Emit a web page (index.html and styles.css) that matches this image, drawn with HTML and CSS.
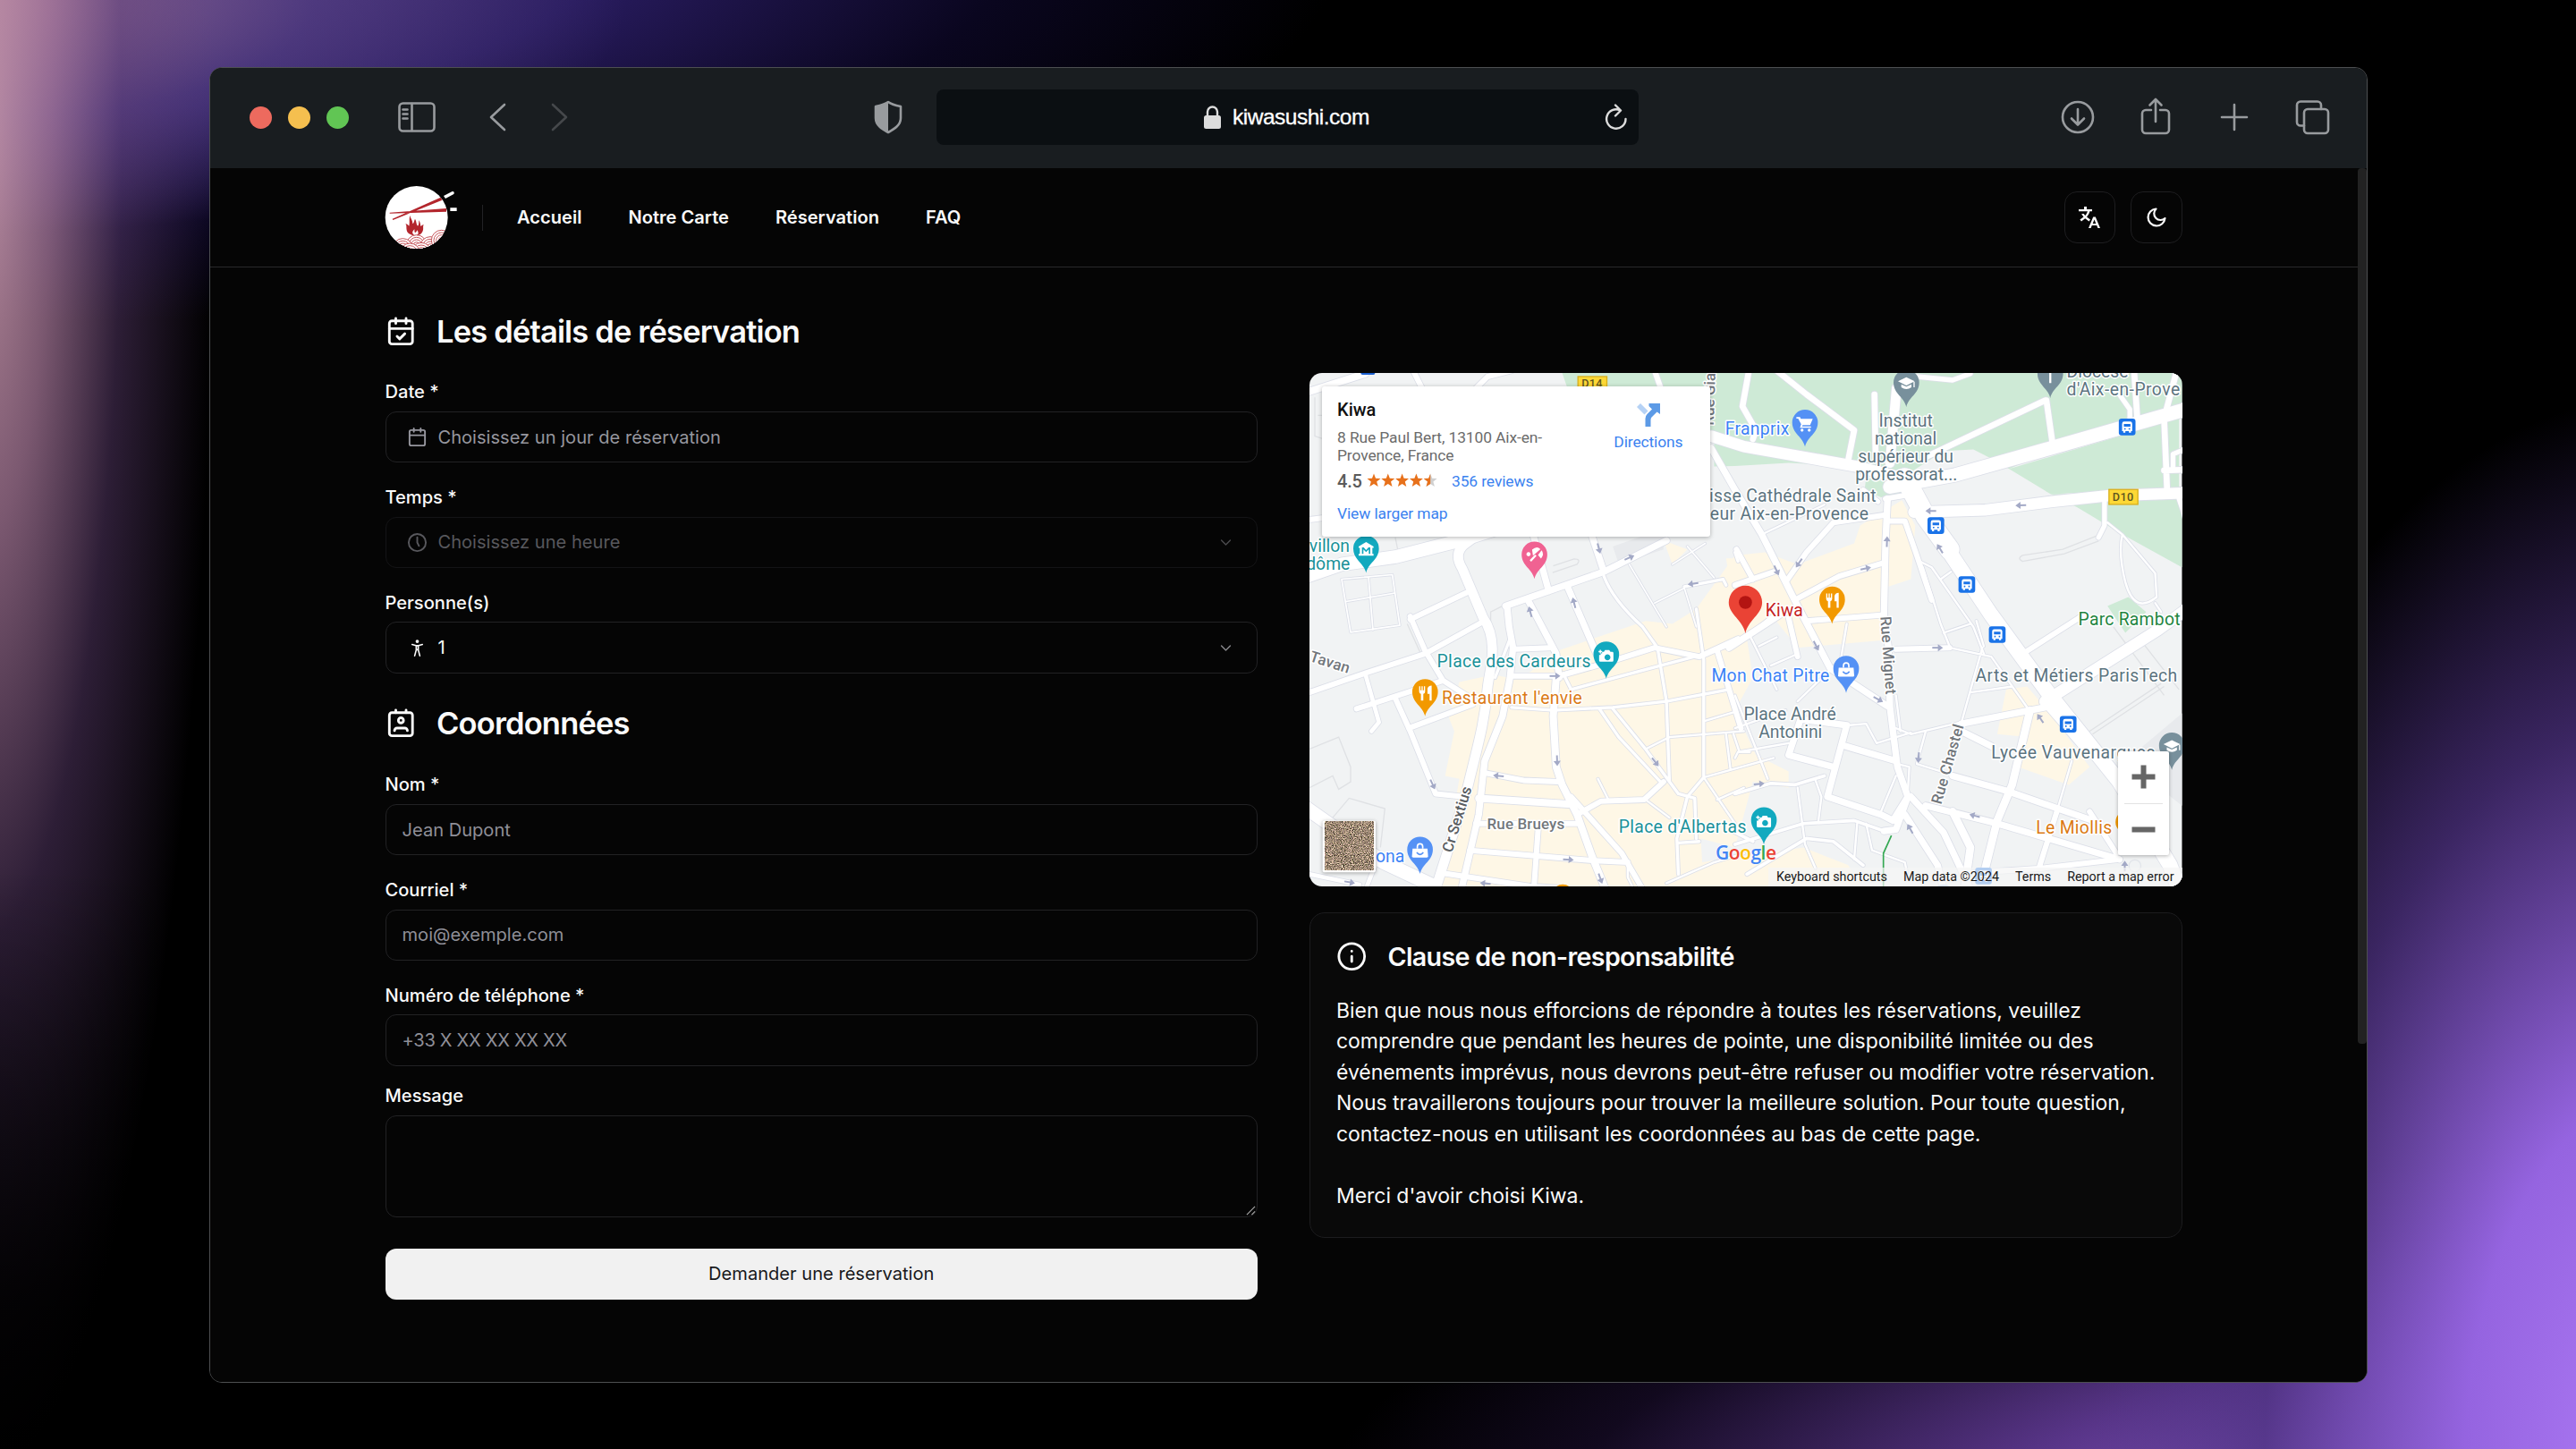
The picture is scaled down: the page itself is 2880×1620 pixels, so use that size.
FILE: index.html
```html
<!DOCTYPE html>
<html lang="fr">
<head>
<meta charset="utf-8">
<title>Kiwa Sushi – Réservation</title>
<link rel="stylesheet" href="styles.css">
</head>
<body>
<div class="window">
  <div class="toolbar">
    <div class="lights"><span class="light red"></span><span class="light amber"></span><span class="light green"></span></div>
    <svg class="ic sidebar" viewBox="0 0 42 34"><rect x="1.5" y="1.5" width="39" height="31" rx="4"/><path d="M15.5 2v30M5.5 8.500h5M5.500 13.500h5M5.500 18.500h5"/></svg>
    <svg class="ic back" viewBox="0 0 20 32"><path d="M18 2 3 16l15 14"/></svg>
    <svg class="ic forward" viewBox="0 0 20 32"><path d="M2 2l15 14L2 30"/></svg>
    <svg class="ic shield" viewBox="0 0 32 38"><path d="M16 2C12 5 7 6 2 7v13c0 8 7 12 14 16 7-4 14-8 14-16V7C25 6 20 5 16 2z"/><path class="solid" d="M16 2C12 5 7 6 2 7v13c0 8 7 12 14 16z"/></svg>
    <div class="url">
      <svg class="lock" viewBox="0 0 19 26"><rect x="0" y="11" width="19" height="15" rx="2.500"/><path d="M4 12V7a5.500 5.500 0 0 1 11 0v5"/></svg>
      <span>kiwasushi.com</span>
      <svg class="reload" viewBox="0 0 26 30"><path d="M23.500 17a10.700 10.700 0 1 1-6-9.600M12 1.500l6 6-6 6"/></svg>
    </div>
    <div class="actions">
      <svg class="ic" viewBox="0 0 44 44"><circle cx="22" cy="22" r="17"/><path d="M22 13v17M15 23.500l7 7 7-7"/></svg>
      <svg class="ic" viewBox="0 0 44 44"><path d="M17 14h-6a4 4 0 0 0-4 4v18a4 4 0 0 0 4 4h22a4 4 0 0 0 4-4V18a4 4 0 0 0-4-4h-6M22 27V2.500M15.500 8.500l6.500-6.500 6.500 6.500"/></svg>
      <svg class="ic" viewBox="0 0 44 44"><path d="M22 8v28M8 22h28"/></svg>
      <svg class="ic" viewBox="0 0 44 44"><rect x="13" y="13" width="27" height="27" rx="4"/><path d="M13 31.500H9a4 4 0 0 1-4-4V8.500a4 4 0 0 1 4-4h19a4 4 0 0 1 4 4V13"/></svg>
    </div>
  </div>

  <div class="viewport">
    <div class="scrollbar"></div>
    <header class="site-header">
      <svg class="logo" viewBox="18 24 246 210">
        <defs><clipPath id="plate"><circle cx="125" cy="129" r="105"/></clipPath></defs>
        <circle cx="125" cy="129" r="105" fill="#fff"/>
        <g clip-path="url(#plate)">
          <g class="waves">
            <g id="wave"><circle cx="125" cy="222" r="34"/><circle cx="125" cy="222" r="26"/><circle cx="125" cy="222" r="18"/><circle cx="125" cy="222" r="10"/></g>
            <use href="#wave" x="-46" y="12"/><use href="#wave" x="46" y="6"/><use href="#wave" x="84" y="-16"/><use href="#wave" x="16" y="26"/><use href="#wave" x="-22" y="28"/>
          </g>
          <path d="M35 113l190-14v11L35 116zM44 134L206 62l5 9L46 138z" fill="#b3262d"/>
          <path d="M103 122c1 10 10 17 9 29 6-4 4-10 8-17 6 10 3 17 9 24 6-5 2-12 5-19 3 9 5 14 4 19 5 0 5-4 11-5-4 9 1 14-4 24-4 9-12 12-22 13-14 0-29-6-31-18-2-10 1-16-4-22 6 1 8 5 12 8 3-12-1-22 3-36zM112 182c3 7 10 10 15 6 6-4 4-11 0-16-2 5-3 8-7 8-3-3-1-7-2-11-3 4-8 8-6 13z" fill="#b3262d" fill-rule="evenodd"/>
        </g>
        <path d="M216 57l29-15q9 0 5 9l-28 15zM238 97h22v11h-22z" fill="#fff"/>
      </svg>
      <nav>
        <a>Accueil</a><a>Notre Carte</a><a>Réservation</a><a>FAQ</a>
      </nav>
      <div class="tools">
        <button class="square" aria-label="Langue"><svg viewBox="0 0 24 24"><path fill="currentColor" d="M0 3h6V0h3v3h6v2.300h-2.600C11.700 8 10.400 10 9 11.500l4 3-1.500 2-4.300-3.300L3 16.500l-1.600-2L5.500 11.500C4.500 10.400 3.700 9.200 3.200 8h2.500c.4.700 1 1.400 1.600 2.100C8.500 8.700 9.400 7.200 9.900 5.300H0z"/><path fill="currentColor" fill-rule="evenodd" d="M16.200 11.500h2.600L24 24h-2.600l-1.200-3h-5.400l-1.200 3H11zm1.300 3L15.700 19h3.600z"/></svg></button>
        <button class="square" aria-label="Thème"><svg viewBox="0 0 24 24" class="moon"><path d="M11.500 2.500a9.500 9.500 0 1 0 10 10.500 6.800 6.800 0 0 1-10-10.500z"/></svg></button>
      </div>
    </header>

    <main>
      <form class="form">
        <h2><svg class="lucide" viewBox="0 0 24 24"><rect x="3" y="4" width="18" height="18" rx="2"/><path d="M16 2v4M8 2v4M3 10h18M9 16l2 2 4-4"/></svg>Les détails de réservation</h2>
        <div class="field">
          <label>Date *</label>
          <div class="control muted"><svg class="lucide small" viewBox="0 0 24 24"><rect x="3" y="4" width="18" height="18" rx="2"/><path d="M16 2v4M8 2v4M3 10h18"/></svg><span>Choisissez un jour de réservation</span></div>
        </div>
        <div class="field">
          <label>Temps *</label>
          <div class="control muted disabled"><svg class="lucide small" viewBox="0 0 24 24"><circle cx="12" cy="12" r="10"/><path d="M12 6v6l2 4"/></svg><span>Choisissez une heure</span><svg class="lucide chevron" viewBox="0 0 24 24"><path d="M5 8.500l7 7 7-7"/></svg></div>
        </div>
        <div class="field">
          <label>Personne(s)</label>
          <div class="control"><svg class="lucide small person" viewBox="0 0 24 24"><circle cx="12" cy="4.300" r="1.100"/><path d="M6 7.800l4.500 1.400h3L18 7.800M10.800 9.200v5L9 21M13.200 9.200v5L15 21M10.800 14h2.400"/></svg><span>1</span><svg class="lucide chevron" viewBox="0 0 24 24"><path d="M5 8.500l7 7 7-7"/></svg></div>
        </div>
        <h2 class="second"><svg class="lucide" viewBox="0 0 24 24"><path d="M17 18a2 2 0 0 0-2-2H9a2 2 0 0 0-2 2M8 2v2M16 2v2"/><rect x="3" y="4" width="18" height="18" rx="2"/><circle cx="12" cy="10" r="2"/></svg>Coordonnées</h2>
        <div class="field">
          <label for="nom">Nom *</label>
          <input id="nom" class="control" type="text" placeholder="Jean Dupont">
        </div>
        <div class="field">
          <label for="mail">Courriel *</label>
          <input id="mail" class="control" type="text" placeholder="moi@exemple.com">
        </div>
        <div class="field last">
          <label for="tel">Numéro de téléphone *</label>
          <input id="tel" class="control" type="text" placeholder="+33 X XX XX XX XX">
        </div>
        <div class="field message">
          <label for="msg">Message</label>
          <textarea id="msg" class="control area"></textarea>
          <svg class="grip" viewBox="0 0 12 12"><path d="M1 11L11 1M7 11l4-4"/></svg>
        </div>
        <button type="button" class="submit">Demander une réservation</button>
      </form>

      <div class="side">
        <div class="map">
          <svg class="map-art" viewBox="42 48 2928 1725">
            <defs>
              <path id="pin" d="M0 82C-7 48-43 38-43 0a43 43 0 0 1 86 0C43 38 7 48 0 82z"/>
              <g id="arrow"><path d="M-17 0H8" fill="none" stroke="#a3a9c6" stroke-width="6"/><path d="M2-12L19 0 2 12z" fill="#a3a9c6"/></g>
              <g id="bus"><rect x="-28" y="-28" width="56" height="56" rx="9" fill="#1a73e8"/><path fill="#fff" fill-rule="evenodd" d="M-17-11q0-7 7-7h20q7 0 7 7v25h-4v5h-7v-5h-12v5h-7v-5h-4zM-11-10v9h22v-9zM-10 4v5h5V4zM5 4v5h5V4z"/></g>
              <g id="cam"><path fill="#fff" fill-rule="evenodd" d="M-14-13h6l4-6h14l4 6h6q4 0 4 4v24q0 5-4 5h-40q-4 0-4-4V-3h5v-5h5zM4-5a10 10 0 1 0 .1 0z"/><path d="M-26-14h12M-20-20v12" stroke="#fff" stroke-width="4"/></g>
              <g id="bag"><path fill="#fff" d="M-25-6h50l2 26q0 4-4 4h-46q-4 0-4-4z"/><path d="M-9-6v-7a9 9 0 0 1 18 0v7" fill="none" stroke="#fff" stroke-width="5"/><path d="M-11 7q11 14 22 0" fill="none" stroke="#5491f5" stroke-width="5"/></g>
              <g id="fork"><path fill="#fff" d="M-20-22h4v14h4v-14h4v14h4v-14h4v18q0 6-6 8v22h-8V4q-6-2-6-8zM22-24v50h-7V4H8v-18q2-9 14-10z"/></g>
              <g id="cap"><path fill="#fff" d="M-28-6L0-20 28-6 0 8zM-17 4L0 12 17 4v10Q0 26-17 14zM24-4h4v18h-4z"/></g>
              <filter id="ground" x="0" y="0" width="1" height="1" color-interpolation-filters="sRGB"><feTurbulence type="fractalNoise" baseFrequency=".3" numOctaves="3" seed="4"/><feColorMatrix values="1.500 0 0 0 -.13  1.300 .2 0 0 -.21  1.200 0 .2 0 -.24  0 0 0 0 1"/></filter>
              <g id="roads">
                <path style="--b:44px" d="M20 735L150 690 330 665 540 612 660 575"/>
                <path style="--b:32px" d="M620 580L560 625Q525 655 555 705L625 870C680 950 645 1050 640 1100 630 1230 600 1320 570 1450L465 1780"/>
                <path style="--b:22px" d="M845 780L790 580M700 830L1030 715 1240 610M1030 715L985 580M705 830L712 900 725 970 715 1070 690 1200 630 1350 610 1530 552 1780M775 810L870 990 880 1070M910 770L1005 990"/>
                <path style="--b:18px" d="M380 875L570 785M380 865L430 980 490 1080 600 1150M42 540L200 520M390 40L425 110M590 110L640 60 720 40M1200 40L1225 110M42 1120L230 1055 430 990 620 885M200 1175L400 1110 490 1080M330 1140L380 1250 465 1460 560 1470M375 1240L590 1160"/>
                <path style="--b:24px" d="M42 110L230 50"/>
                <path style="--b:14px" d="M230 1060L275 1220 250 1250"/>
                <path style="--b:5px" d="M150 740L320 725 345 895 180 918zM240 732L255 910M165 815L325 787M1115 690L1210 850 1240 900M1200 820L1300 770M1260 690L1370 620M1310 630L1400 735M1300 770L1340 900"/>
                <path style="--b:10px" d="M1030 730Q1060 810 1160 900L1210 970 1240 1150 1250 1420M1300 765L1430 740 1440 760M1340 840L1365 1010V1400M1470 650L1480 680M715 940L665 1070M720 1170L860 1180 1060 1170 1240 1150 1450 1110M1015 1175L1080 1270 1220 1420M1060 1175L1170 1310 1280 1460 1335 1475 1340 1610M900 1070L920 1110 1220 1030 1410 980M1210 970L1360 1000 1500 940 1600 860M880 1060L1210 970M1365 1405L1310 1470 1275 1610 1280 1730M1280 1625L1350 1620"/>
                <path style="--b:7px" d="M1170 1310L1250 1270 1500 1250M1365 1405L1470 1560M1365 1405L1600 1340M1410 1480L1500 1440M1370 1215L1470 1185M1010 1410L1045 1480M1170 1480L1250 1540M1240 1760L1400 1690 1500 1660M1440 1260L1455 1380M1465 1260L1485 1320H1520M1110 1690V1740L1130 1780"/>
                <path style="--b:18px" d="M730 975L850 970M720 1065H880L1040 1020 1200 970 1350 1000 1480 940M630 1390L760 1415 880 1420M600 1560H940M580 1650L1000 1685 1110 1690M480 1725L780 1770 900 1778M810 1570L795 1780M940 1530L1020 1485 1165 1480 1230 1420M920 1470L1090 1660 1160 1780M1410 980L1490 1240"/>
                <path style="--b:24px" d="M870 1070L860 1200 870 1370 890 1430 940 1530 990 1670 1035 1780M610 1475L910 1495"/>
                <path style="--b:46px" d="M20 1500L290 1690 460 1770"/>
                <path style="--b:14px" d="M42 1730L210 1765M235 1770L270 1680"/>
                <path style="--b:38px" d="M1390 260L1500 295 1870 360 2030 400"/>
                <path style="--b:22px" d="M1390 300L1470 440 1560 590 1670 810 1790 1040 1980 1165"/>
                <path style="--b:46px" d="M1990 430L2210 390 2530 300 3000 165"/>
                <path style="--b:38px" d="M2070 515L2310 508 2530 480 2720 460 3000 450"/>
                <path style="--b:66px" d="M2040 400L2110 530 2190 640"/>
                <path style="--b:50px" d="M2120 540L2190 650 2330 860 2520 1120 2760 1420 2930 1700 2960 1780"/>
                <path style="--b:22px" d="M1982 470L1975 620 1970 860 1985 970 1990 1170 2015 1370 2050 1470"/>
                <path style="--b:22px" d="M1450 970L1620 860"/>
                <path style="--b:20px" d="M1610 40L1710 120 1870 240 1850 340M1515 50L1495 160 1540 240 1530 270M1938 120L1942 340M2110 330L2510 140M2515 140L2535 280M2810 50L2820 200M2950 50L2910 200 2920 440M2910 375L3000 372"/>
                <path style="--b:32px" d="M2012 100L1990 350"/>
                <path style="--b:16px" d="M2710 480V560L2690 600M2080 60L2200 72 2260 50M2760 120L2795 170V210M2940 370V320L2990 300M2960 470L2990 560M1950 480L1900 440"/>
                <path style="--b:7px" d="M2720 550L2770 590 2880 720 2885 800Q2810 860 2780 750 2755 650 2770 590M2880 820L2900 850M2090 680L2130 700 2270 900 2305 990M2160 740L2195 715M1560 590L1770 490M2100 700L2160 890 2190 965M2170 920L2260 890"/>
                <path style="--b:18px" d="M1975 470L2045 458M1640 750L1710 650 1800 550 1970 525M1980 545H2040L2080 660 2130 810M1670 810L1820 730 1970 685M1470 760L1600 715M1475 640L1530 740M1710 880L1970 860M2010 975L2190 970"/>
                <path style="--b:18px" d="M1650 870L1680 1000"/>
                <path style="--b:7px" d="M2190 970L2330 1000 2450 1170M2300 970L2230 1220 2060 1260 2010 1240M2280 880L2305 965M1845 890L1825 1010 1680 1150M1550 965L1610 935M1590 1030L1670 995M1520 930L1610 1110M1470 1130L1580 1410M1470 1340L1480 1320 1650 1290M1470 1240L1640 1180M1855 1230L1910 1225 1945 1290 2060 1255M2010 1130L2025 1250M2110 1250L2080 1360 2210 1400M2260 1120L2400 1100M2600 1350L2550 1520M2015 1360L2055 1370 2050 1450M2010 1400L1960 1520M1680 1440L1705 1630 1740 1710M1880 1560L1870 1680M1910 1560L1930 1650 2040 1690 2050 1740M1740 1415L1760 1470 1750 1550"/>
                <path style="--b:11px" d="M1470 1460L1590 1425 1670 1430 1770 1400M1470 1630L1700 1560 1870 1550 1970 1585M1510 1730L1710 1610 1800 1620 1900 1700M1470 1590L1530 1620"/>
                <path style="--b:22px" d="M1650 1330L1800 1370M1650 1330L1690 1210 1845 1230 1780 1470 1960 1530 2000 1550 2050 1470 2010 1580 1970 1585M1840 1300L2010 1350M2040 1530L2150 1700 2170 1780M2060 1470L2170 1590 2260 1780M2110 1500L2350 1560 2760 1680M2200 1400L2380 1450 2670 1550M2230 1225L2510 1170M2230 1250L2330 1300"/>
                <path style="--b:26px" d="M2460 1180L2400 1430 2350 1550 2310 1710M2200 1520L2260 1640 2240 1780"/>
                <path style="--b:18px" d="M2510 1160L2640 1310M2550 1520L2490 1710M2660 1520L2750 1660M2270 1725L2500 1710 2760 1680M2420 1000L2640 860"/>
                <path style="--b:38px" d="M2510 1150L2890 910 3000 830"/>
              </g>
            </defs>
            <rect x="42" y="48" width="2928" height="1725" fill="#f1f3f4"/>
            <g fill="#ceead6">
              <path d="M890 48H2970V200L2550 300 2390 370 2530 455 2620 500 2770 590 2970 700V460L2720 450 2530 455 2390 370 2320 330 2270 305 2170 310 2030 400 1860 360 1650 350 1470 360 1400 362 1400 260 960 250z"/>
              <path d="M2390 370L2960 200V450L2720 445 2530 455z"/>
              <path d="M1910 400L2020 420 2030 450 1960 465 1905 440zM2720 830L2790 800 2850 850 2780 920zM490 1745H540V1780H485zM1630 1290L1660 1280 1650 1300z"/>
            </g>
            <g fill="#fef7e6">
              <path d="M545 1085L660 1060 730 1075 785 1050 860 985 1170 880 1260 890 1340 840 1470 660 1570 650 1680 690 1870 620 1890 560 2030 475 2075 560 2060 740 1970 770V945L1680 970 1600 870 1510 940 1530 1070 1470 1180 1540 1330 1650 1385V1440L1530 1420 1470 1640 1355 1610 1360 1690 1700 1640 1850 1700 1900 1780H480L545 1410 497 1400 528 1250 510 1205z"/>
              <path d="M2380 1110L2450 1100 2520 1180 2660 1370 2590 1430 2420 1370 2450 1270 2350 1260zM1230 610L1310 640 1260 690zM1440 670H1500V740L1450 735zM2560 1160L2700 1320 2720 1370 2580 1210z"/>
            </g>
            <path d="M1060 630L1230 570V640L1080 690zM2970 1190L2780 1350 2970 1500z" fill="#e8eaed"/>
            <g class="outlines">
              <path d="M42 1310L140 1270 180 1370V1420L140 1445 120 1400 42 1440M120 1540L175 1475 295 1510 280 1640M60 130V260L90 270M70 190H100M370 890L420 1000M650 900V850L710 820M2660 1250L2900 1090M2670 1260L2910 1100M2740 900L2910 1130M2820 930L2960 1110M330 600L340 650M860 695L930 672Q955 672 940 690L858 718M2695 590L2570 640 2435 660Q2415 670 2435 680L2575 655 2690 612"/>
            </g>
            <use href="#roads" class="casing"/>
            <use href="#roads" class="fill"/>
            <path d="M1995 1600L1968 1660V1780" fill="none" stroke="#34a853" stroke-width="5"/>
            <g>
              <use href="#arrow" transform="translate(1013 636) rotate(75)"/><use href="#arrow" transform="translate(1115 668) rotate(-25)"/><use href="#arrow" transform="translate(1330 755) rotate(172)"/><use href="#arrow" transform="translate(930 820) rotate(-105)"/><use href="#arrow" transform="translate(783 850) rotate(-105)"/>
              <use href="#arrow" transform="translate(865 1065)"/><use href="#arrow" transform="translate(873 1348) rotate(88)"/><use href="#arrow" transform="translate(1202 1353) rotate(52)"/><use href="#arrow" transform="translate(677 1400) rotate(185)"/><use href="#arrow" transform="translate(455 1428) rotate(65)"/><use href="#arrow" transform="translate(910 1681) rotate(4)"/><use href="#arrow" transform="translate(1018 1744) rotate(70)"/><use href="#arrow" transform="translate(633 1761) rotate(186)"/><use href="#arrow" transform="translate(176 1757) rotate(10)"/>
              <use href="#arrow" transform="translate(2430 492) rotate(178)"/><use href="#arrow" transform="translate(2128 511) rotate(180)"/><use href="#arrow" transform="translate(1980 615) rotate(-88)"/><use href="#arrow" transform="translate(2158 638) rotate(-122)"/><use href="#arrow" transform="translate(1685 685) rotate(125)"/><use href="#arrow" transform="translate(1609 710) rotate(65)"/><use href="#arrow" transform="translate(1908 704) rotate(-12)"/>
              <use href="#arrow" transform="translate(1742 963) rotate(62)"/><use href="#arrow" transform="translate(2149 970)"/><use href="#arrow" transform="translate(1950 1143) rotate(28)"/><use href="#arrow" transform="translate(2086 1338) rotate(95)"/><use href="#arrow" transform="translate(2495 1208) rotate(-125)"/><use href="#arrow" transform="translate(1550 1427) rotate(-5)"/><use href="#arrow" transform="translate(2275 1534) rotate(195)"/><use href="#arrow" transform="translate(2058 1578) rotate(-120)"/><use href="#arrow" transform="translate(2778 1704) rotate(-90)"/>
            </g>
            <circle cx="2812" cy="1702" r="20" fill="#f1f3f4" stroke="#e2e5ea" stroke-width="4"/>
            <use href="#bus" x="2786" y="229"/><use href="#bus" x="2144" y="560"/><use href="#bus" x="2248" y="758"/><use href="#bus" x="2350" y="926"/><use href="#bus" x="2588" y="1227"/><use href="#bus" x="2304" y="1736"/><rect x="214" y="20" width="48" height="34" rx="6" fill="#1a5fd0"/>
            <g class="roadsign"><rect x="943" y="60" width="97" height="50"/><text x="955" y="97">D14</text><rect x="2725" y="439" width="97" height="50"/><text x="2737" y="478">D10</text></g>

            <g class="pins">
              <use href="#pin" x="232" y="637" fill="#12a9bf"/><path transform="translate(232 640)" fill="#fff" fill-rule="evenodd" d="M-25-10L0-25 25-10v5h-4v20h4v6h-50v-6h4V-5h-4zM-14 15h5V0l9 9 9-9v15h5V-7h-6l-8 9-8-9h-6z"/>
              <use href="#pin" x="797" y="657" fill="#f06292"/><path transform="translate(797 657)" fill="#fff" d="M-8-16Q8-30 20-18L-5 4zM24-14Q34-2 22 14L12 2zM2 0l5 5-18 19-5-5zM-20-8a7 7 0 1 0 .1 0z"/>
              <use href="#pin" x="1705" y="214" fill="#5491f5"/><path transform="translate(1705 216)" fill="#fff" d="M-29-20h12l3 6h40L17 7h-25l-2 4h30v5h-37l4-12-10-19h-6zM-10 19a5 5 0 1 0 .1 0zM14 19a5 5 0 1 0 .1 0z"/>
              <use href="#pin" x="1796" y="808" fill="#f29900"/><use href="#fork" x="1796" y="810"/>
              <use href="#pin" x="2045" y="80" fill="#78909c"/><use href="#cap" x="2045" y="82"/>
              <use href="#pin" x="2528" y="50" fill="#78909c"/><path d="M2528 48v34" stroke="#fff" stroke-width="7"/>
              <use href="#pin" x="1038" y="992" fill="#12a9bf"/><use href="#cam" x="1038" y="997"/>
              <use href="#pin" x="430" y="1118" fill="#f29900"/><use href="#fork" x="430" y="1121"/>
              <use href="#pin" x="413" y="1647" fill="#5491f5"/><use href="#bag" x="413" y="1650"/>
              <use href="#pin" x="1843" y="1040" fill="#5491f5"/><use href="#bag" x="1843" y="1043"/>
              <use href="#pin" x="1567" y="1548" fill="#12a9bf"/><use href="#cam" x="1567" y="1553"/>
              <use href="#pin" x="2936" y="1298" fill="#78909c"/><use href="#cap" x="2936" y="1300"/>
              <circle cx="2785" cy="1555" r="38" fill="#f29900"/><circle cx="892" cy="1800" r="36" fill="#f29900"/><circle cx="2170" cy="1800" r="36" fill="#a8c7fa"/>
              <path d="M1505 922C1497 878 1449 858 1449 818a56 56 0 0 1 112 0C1561 858 1513 878 1505 922z" fill="#ea4335"/><circle cx="1505" cy="818" r="22" fill="#b31412"/>
            </g>

            <g class="labels">
              <text class="blue" x="1437" y="256" textLength="215">Franprix</text>
              <text class="mid" x="2043" y="227">Institut</text><text class="mid" x="2043" y="288">national</text><text class="mid" x="2043" y="348">supérieur du</text><text class="mid" x="2045" y="408">professorat...</text>
              <text x="2583" y="64">Diocèse</text><text x="2583" y="123" textLength="380">d'Aix-en-Prove</text>
              <text x="1384" y="481" textLength="560">isse Cathédrale Saint</text><text x="1386" y="541" textLength="532">eur Aix-en-Provence</text>
              <text class="tealt end" x="177" y="649">villon</text><text class="tealt end" x="178" y="708">dôme</text>
              <text class="redt" x="1572" y="863" textLength="126">Kiwa</text>
              <text class="greent" x="2622" y="893" textLength="342">Parc Rambot</text>
              <text class="tealt" x="470" y="1035" textLength="516">Place des Cardeurs</text>
              <text class="oranget" x="486" y="1160" textLength="471">Restaurant l'envie</text>
              <text class="blue" x="1391" y="1083" textLength="396">Mon Chat Pitre</text>
              <text class="mid" x="1654" y="1213">Place André</text><text class="mid" x="1656" y="1273">Antonini</text>
              <text x="2277" y="1083" textLength="677">Arts et Métiers ParisTech</text>
              <text x="2330" y="1342" textLength="550">Lycée Vauvenargues</text>
              <text class="tealt" x="1080" y="1590" textLength="428">Place d'Albertas</text>
              <text class="blue" x="264" y="1690">ona</text>
              <text class="oranget" x="2480" y="1595" textLength="255">Le Miollis</text>
              <text class="street" x="638" y="1580" textLength="260">Rue Brueys</text>
              <text class="street" transform="translate(40 1014) rotate(18)" textLength="138">Tavan</text>
              <text class="street dark" transform="translate(520 1660) rotate(-73)" textLength="228">Cr Sextius</text>
              <text class="street" transform="translate(1958 866) rotate(86)" textLength="262">Rue Mignet</text>
              <text class="street" transform="translate(2162 1498) rotate(-74)" textLength="276">Rue Chastel</text>
              <text class="street" transform="translate(1398 224) rotate(-88)">Rue Gia</text>
            </g>
            <g class="satellite"><rect x="86" y="1550" width="178" height="174" rx="6" fill="#fff"/><rect x="93" y="1553" width="164" height="163" filter="url(#ground)"/></g>
          </svg>

          <div class="place">
            <div class="place-info">
              <div class="place-name">Kiwa</div>
              <div class="place-address">8 Rue Paul Bert, 13100 Aix-en-<br>Provence, France</div>
              <div class="rating"><b>4.5</b>
                <svg class="stars" viewBox="0 0 79 16"><defs><path id="star" d="M8 .5l2 5.300 5.500.2-4.300 3.500 1.500 5.500L8 11.900 3.300 15l1.500-5.500L.5 6l5.500-.2z"/><clipPath id="half"><path d="M64 0h7.200v16H64z"/></clipPath></defs><g fill="#e7711b"><use href="#star"/><use href="#star" x="15.800"/><use href="#star" x="31.600"/><use href="#star" x="47.400"/></g><use href="#star" x="63.200" fill="#d0d0d0"/><g clip-path="url(#half)"><use href="#star" x="63.200" fill="#e7711b"/></g></svg>
                <a>356 reviews</a></div>
              <a class="larger">View larger map</a>
            </div>
            <div class="directions">
              <svg viewBox="0 0 26 26"><path d="M4 0L0 4l8.500 8.500L12.500 8.500z" fill="#b6d2f5"/><path d="M9.500 26V17q0-3 2-5l5.500-5.500L13.500 3V0H26v12l-3.500-2.500-6 6q-1 1-1 3V26z" fill="#5c9ae6"/></svg>
              <a>Directions</a>
            </div>
          </div>
          <div class="zoom"><svg viewBox="0 0 27 27"><path d="M13.500.5v26M.5 13.500h26"/></svg><i></i><svg viewBox="0 0 27 27"><path d="M.5 13.500h26"/></svg></div>
          <div class="google"><span class="g1">G</span><span class="g2">o</span><span class="g3">o</span><span class="g1">g</span><span class="g4">l</span><span class="g2">e</span></div>
          <div class="credits"><span>Keyboard shortcuts</span><span>Map data ©2024</span><span>Terms</span><span>Report a map error</span></div>
        </div>

        <section class="notice">
          <h3><svg class="lucide" viewBox="0 0 24 24"><circle cx="12" cy="12" r="10"/><path d="M12 16v-4M12 8h.01"/></svg>Clause de non-responsabilité</h3>
          <p>Bien que nous nous efforcions de répondre à toutes les réservations, veuillez<br>comprendre que pendant les heures de pointe, une disponibilité limitée ou des<br>événements imprévus, nous devrons peut-être refuser ou modifier votre réservation.<br>Nous travaillerons toujours pour trouver la meilleure solution. Pour toute question,<br>contactez-nous en utilisant les coordonnées au bas de cette page.</p>
          <p>Merci d'avoir choisi Kiwa.</p>
        </section>
      </div>
    </main>
  </div>
</div>
</body>
</html>
```
FILE: styles.css
```css
* { box-sizing: border-box; }

body {
  margin: 0;
  width: 2880px;
  height: 1620px;
  overflow: hidden;
  padding: 75px 0 0 234px;
  font-family: Inter, "Liberation Sans", sans-serif;
  color: #fafafa;
  background:
    linear-gradient(to bottom, transparent 60%, rgba(0, 0, 0, .75) 90%, rgba(0, 0, 0, .85) 100%) 0 0 / 1000px 100% no-repeat,
    radial-gradient(ellipse 260px 1500px at -20px 150px, rgba(200, 152, 170, .92) 0%, rgba(170, 122, 155, .72) 30%, rgba(100, 66, 120, .45) 60%, transparent 100%),
    radial-gradient(ellipse 700px 260px at 0 0, rgba(165, 120, 155, .75) 0%, rgba(100, 75, 145, .5) 50%, transparent 100%),
    radial-gradient(ellipse 1500px 420px at 0 -60px, rgba(95, 68, 150, .85) 0%, rgba(50, 34, 118, .8) 45%, rgba(20, 12, 62, .5) 75%, transparent 100%),
    radial-gradient(ellipse 640px 1200px at 2980px 1640px, #b07cf8 0%, #9564e0 35%, rgba(78, 50, 130, .75) 70%, transparent 100%),
    radial-gradient(ellipse 1400px 380px at 2880px 1680px, #a873f2 0%, rgba(110, 66, 170, .8) 45%, rgba(35, 18, 60, .5) 80%, transparent 100%),
    #000;
}

button, input, textarea { font: inherit; color: inherit; background: none; }
svg { display: block; flex: none; }

.window {
  display: flex;
  flex-direction: column;
  width: 2413px;
  height: 1471px;
  border: 1px solid #4d4f51;
  border-radius: 14px;
  overflow: hidden;
  background: #050505;
}

/* browser toolbar */
.toolbar {
  display: flex;
  align-items: center;
  height: 112px;
  padding: 0 39px 2px 43.5px;
  background: #191d20;
}
.lights { display: flex; gap: 18px; }
.light { width: 25px; height: 25px; border-radius: 50%; }
.red { background: #ed6a5e; }
.amber { background: #f5bf4f; }
.green { background: #61c554; }
.ic { fill: none; stroke: #989b9e; stroke-width: 2.6; stroke-linecap: round; stroke-linejoin: round; }
.ic .solid { fill: #989b9e; stroke: none; }
.sidebar { width: 42px; height: 34px; margin-left: 55px; }
.back { width: 20px; height: 32px; margin-left: 59px; }
.forward { width: 20px; height: 32px; margin-left: 50px; stroke: #45484b; }
.shield { width: 32px; height: 38px; margin-left: 341.5px; }
.url {
  display: flex;
  align-items: center;
  width: 785px;
  height: 62px;
  margin-left: 38px;
  padding: 0 12px 0 299px;
  border-radius: 8px;
  background: #0b0f12;
  font: 24.5px "Liberation Sans", sans-serif;
  color: #fff;
}
.url span { margin-left: 13px; letter-spacing: -.5px; -webkit-text-stroke: .3px #fff; }
.lock { width: 19px; height: 26px; fill: #dcdcdc; }
.lock path { fill: none; stroke: #dcdcdc; stroke-width: 2.4; }
.reload { width: 26px; height: 30px; margin-left: auto; fill: none; stroke: #dcdcdc; stroke-width: 2.4; stroke-linecap: round; stroke-linejoin: round; }
.actions { display: flex; gap: 43.500px; margin-left: auto; }
.actions .ic { width: 44px; height: 44px; }

.viewport { position: relative; flex: 1; background: #050505; }
.scrollbar {
  position: absolute;
  right: 0;
  top: 0;
  width: 10px;
  height: 979px;
  border-radius: 4px;
  background: #222;
}

/* site header */
.site-header {
  display: flex;
  align-items: center;
  height: 111px;
  margin-right: 10px;
  padding: 0 196.5px 0 195px;
  border-bottom: 1.4px solid #29292b;
}
.logo { width: 82px; height: 70px; }
.waves { fill: #fff; stroke: #c4555b; stroke-width: 3; }
nav {
  display: flex;
  align-items: center;
  gap: 52px;
  height: 29px;
  margin-left: 27px;
  padding-left: 38px;
  border-left: 1.400px solid #222225;
  font-size: 20.1px;
  font-weight: 600;
}
.tools { display: flex; gap: 17px; margin-left: auto; }
.square {
  display: grid;
  place-items: center;
  width: 57.400px;
  height: 57.400px;
  padding: 0;
  border: 1.4px solid #1e1e20;
  border-radius: 14px;
}
.square svg { width: 24px; height: 24px; }
.moon { fill: none; stroke: currentColor; stroke-width: 2.2; stroke-linejoin: round; }

/* content */
main {
  display: grid;
  grid-template-columns: 975.5px 975.5px;
  gap: 58px;
  padding: 53px 0 0 195.5px;
}
.lucide { width: 34.5px; height: 34.5px; fill: none; stroke: currentColor; stroke-width: 2; stroke-linecap: round; stroke-linejoin: round; }
h2 {
  display: flex;
  align-items: center;
  gap: 23px;
  height: 36px;
  margin: 0 0 38.300px;
  font-size: 34.5px;
  font-weight: 600;
  letter-spacing: -.84px;
}
h2.second { margin: 37.400px 0 39.100px; }
.field { margin-bottom: 26.600px; }
label { display: block; height: 24px; margin-bottom: 9.700px; font-size: 20.1px; line-height: 24px; font-weight: 500; }
.control {
  display: flex;
  align-items: center;
  width: 100%;
  height: 57.400px;
  padding: 0 18px;
  border: 1.4px solid #222224;
  border-radius: 12px;
  outline: none;
  font-size: 20.1px;
}
div.control { padding: 0 23px; gap: 12px; }
.control::placeholder { color: #8f8f98; opacity: 1; }
#tel::placeholder { letter-spacing: -.3px; }
.muted { color: #96969e; }
.disabled { color: #58585d; border-color: #141416; }
.small { width: 23px; height: 23px; }
.person { stroke-width: 1.7; }
.chevron { width: 17px; height: 17px; margin-left: auto; margin-right: 3px; stroke: #88888c; }
.disabled .chevron { stroke: #4b4b4e; }
.field.last { margin-bottom: 21.400px; }
.message { position: relative; margin-bottom: 34.500px; }
.area { display: block; height: 114.500px; resize: none; }
.grip { position: absolute; right: 2px; bottom: 2px; width: 11px; height: 11px; fill: none; stroke: #aaa; stroke-width: 1.2; }
.submit {
  width: 100%;
  height: 57.400px;
  border: 0;
  border-radius: 12px;
  background: #f1f1f1;
  color: #18181b;
  font-size: 20.1px;
}

.side { padding-top: 64.5px; }

/* map */
.map { position: relative; height: 574.5px; border-radius: 14px; overflow: hidden; font-family: Roboto, sans-serif; }
.map-art { width: 975.5px; height: 574.7px; }
#roads path { fill: none; stroke-width: calc(var(--b) + var(--edge)); }
.casing { --edge: 5px; stroke: #dcdfe8; stroke-linecap: round; stroke-linejoin: round; }
.fill { --edge: 0px; stroke: #fff; stroke-linecap: round; stroke-linejoin: round; }
.outlines { fill: none; stroke: #dfe1e4; stroke-width: 4; }
.roadsign rect { fill: #fdd835; stroke: #d9b01c; stroke-width: 4; }
.roadsign text { font-size: 38px; font-weight: 500; fill: #5f5420; letter-spacing: 1px; }
.labels text { font-size: 58px; fill: #5c7480; stroke: #fff; stroke-width: 9; stroke-linejoin: round; paint-order: stroke; }
.labels .mid { text-anchor: middle; }
.labels .end { text-anchor: end; }
.labels .blue { fill: #3b82f6; }
.labels .tealt { fill: #1a9199; }
.labels .redt { fill: #c5221f; }
.labels .greent { fill: #1e8540; }
.labels .oranget { fill: #db7a14; }
.labels .street { font-size: 51px; font-weight: 500; fill: #72777c; }
.labels .dark { fill: #5a5e62; }
.satellite { filter: drop-shadow(0 3px 6px rgba(0, 0, 0, .35)); }

.place {
  position: absolute;
  left: 14px;
  top: 15px;
  display: flex;
  width: 434px;
  height: 168px;
  padding: 15px 17px;
  border-radius: 3px;
  background: #fff;
  box-shadow: 0 1px 5px rgba(0, 0, 0, .3);
  color: #5b5b5b;
  font-size: 17.4px;
}
.place a { color: #3b82f0; letter-spacing: -.1px; }
.place-info { width: 290px; }
.place-name { height: 22px; line-height: 22px; font-size: 20px; font-weight: 500; color: #111; }
.place-address { margin-top: 10px; line-height: 20.300px; color: #6b6b6b; letter-spacing: -.1px; }
.rating { display: flex; align-items: center; height: 22px; margin-top: 8px; }
.rating b { width: 31px; font-size: 20px; font-weight: 500; letter-spacing: -.2px; }
.stars { width: 79px; height: 16px; margin: -2px 16px 0 2px; }
.larger { display: block; margin-top: 15px; line-height: 20px; }
.directions { display: flex; flex-direction: column; align-items: center; width: 105px; margin-left: 8px; padding-top: 4px; line-height: 20px; }
.directions svg { width: 26px; height: 26px; margin-bottom: 7px; }

.zoom {
  position: absolute;
  right: 15px;
  bottom: 35px;
  display: flex;
  flex-direction: column;
  align-items: center;
  justify-content: space-between;
  width: 57px;
  height: 116px;
  padding: 15px 0;
  border-radius: 2px;
  background: #fff;
  box-shadow: 0 1px 4px rgba(0, 0, 0, .3);
}
.zoom svg { width: 27px; height: 27px; stroke: #666; stroke-width: 6; }
.zoom i { width: 43px; height: 1px; background: #e2e2e2; }
.google {
  position: absolute;
  left: 454px;
  top: 521px;
  font: 600 21px/30px "Open Sans", sans-serif;
  letter-spacing: -.5px;
  text-shadow: 0 0 2px #fff, 0 0 2px #fff;
}
.g1 { color: #4285f4; }
.g2 { color: #ea4335; }
.g3 { color: #fbbc04; }
.g4 { color: #34a853; }
.credits {
  position: absolute;
  right: 0;
  bottom: 0;
  display: flex;
  gap: 18px;
  height: 21px;
  padding: 0 9px;
  background: rgba(245, 245, 245, .7);
  color: #1a1a1a;
  font-size: 14.300px;
  line-height: 20px;
}

/* notice card */
.notice {
  height: 364px;
  margin-top: 29px;
  padding: 29px;
  border: 1.4px solid #1c1c1e;
  border-radius: 17px;
  background: #090909;
}
h3 {
  display: flex;
  align-items: center;
  gap: 23px;
  height: 38px;
  margin: 0 0 25px;
  font-size: 28.7px;
  font-weight: 600;
  letter-spacing: -.69px;
}
p { margin: 0 0 34.500px; font-size: 23px; line-height: 34.450px; letter-spacing: -.045px; white-space: nowrap; }
```
